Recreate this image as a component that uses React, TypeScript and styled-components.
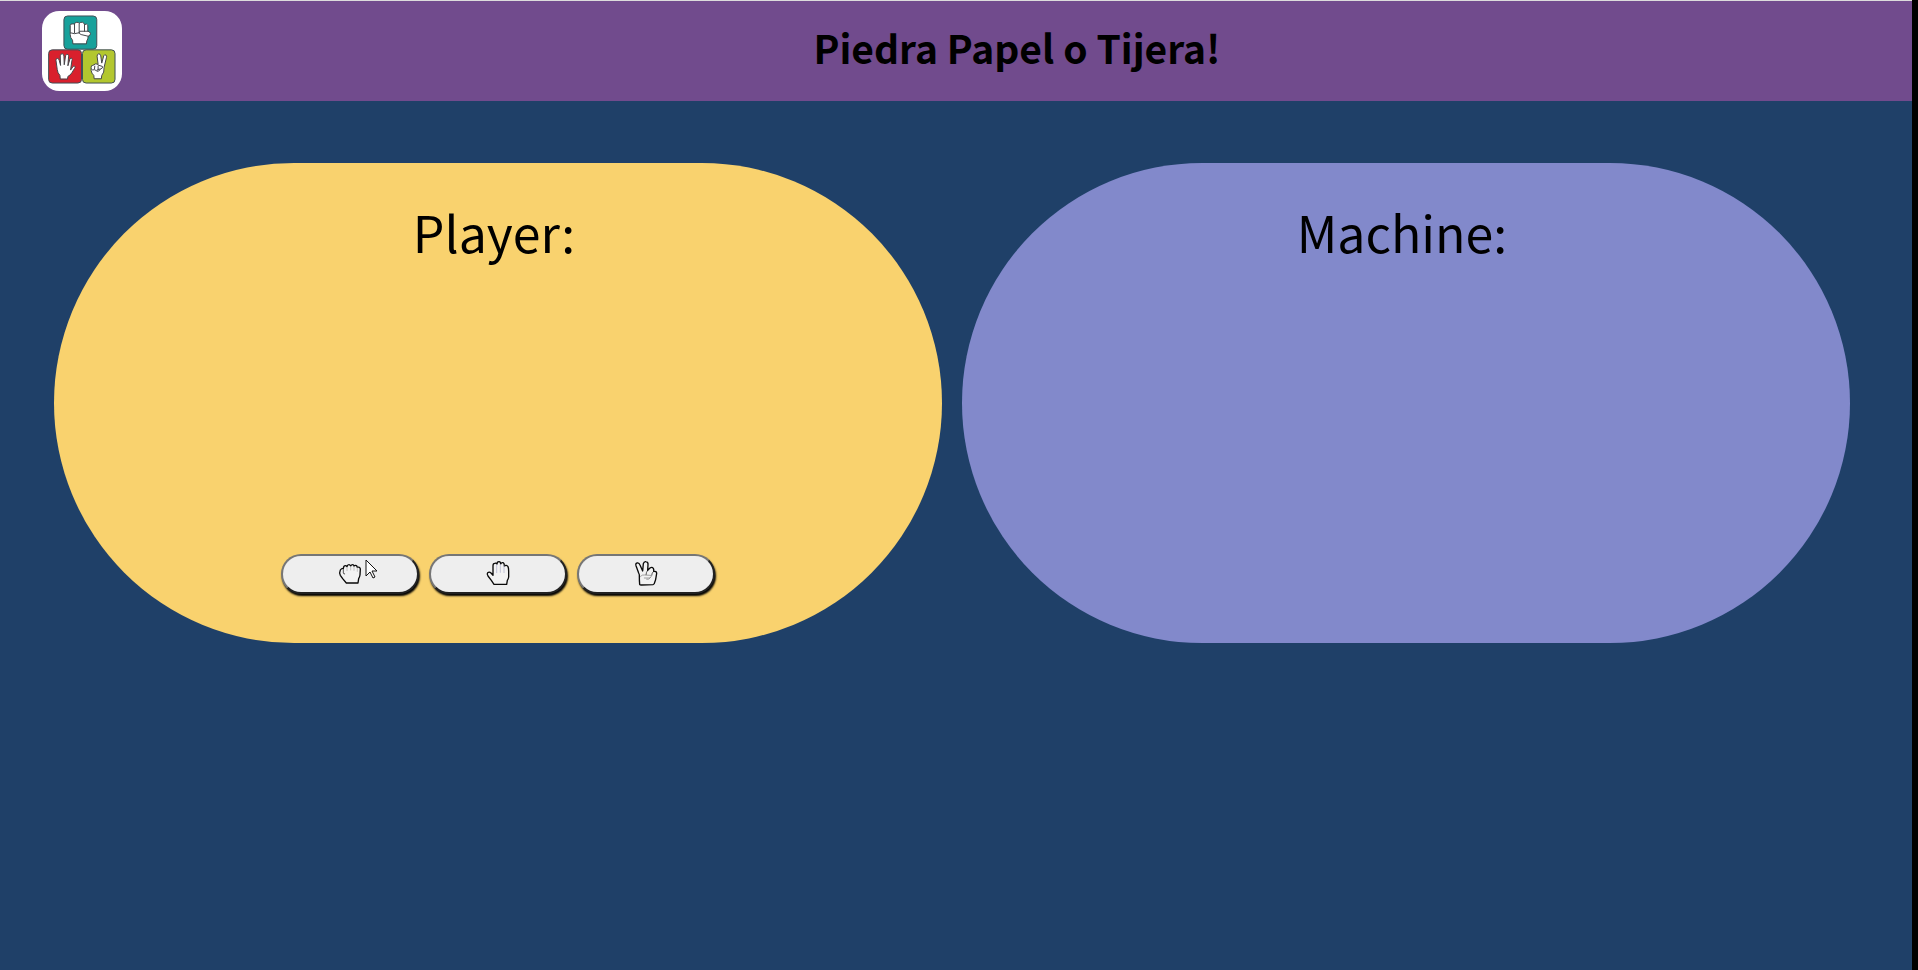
import React from "react";
import styled, { createGlobalStyle } from "styled-components";

const GlobalStyle = createGlobalStyle`
  * { box-sizing: border-box; }
  html { background: #000; }
  body { margin: 0; font-family: "Noto Sans CJK SC", "Noto Sans", sans-serif; color: #000; }
`;

const Page = styled.div`
  min-height: 100vh;
  margin-right: 6px;
  background: #1f4068;
`;

const Header = styled.header`
  display: flex;
  align-items: center;
  height: 101px;
  padding-left: 42px;
  border-top: 1px solid #dcdcdc;
  background: #714b8d;
`;

const Logo = styled.svg`
  flex: none;
  width: 80px;
  height: 80px;
`;

const Title = styled.h1`
  flex: 1;
  margin: 0;
  padding-bottom: 8px;
  text-align: center;
  font-size: 39px;
  line-height: 48px;
  font-weight: 700;
`;

const Board = styled.main`
  display: flex;
  gap: 20px;
  padding: 62px 62px 62px 54px;
`;

const Panel = styled.section<{ $color: string }>`
  flex: 1;
  display: flex;
  flex-direction: column;
  align-items: center;
  justify-content: space-between;
  min-height: 480px;
  padding: 36px 20px 49px 12px;
  border-radius: 240px;
  background: ${(p) => p.$color};
`;

const PanelTitle = styled.h2`
  margin: 0;
  font-size: 50px;
  line-height: 64px;
  font-weight: 400;
`;

const Choices = styled.div`
  display: flex;
  gap: 10px;
  padding-left: 8px;
`;

const Choice = styled.button`
  position: relative;
  display: flex;
  align-items: center;
  justify-content: center;
  width: 138px;
  height: 40px;
  padding: 0;
  border: 2px solid;
  border-color: #767676 #222 #222 #767676;
  border-radius: 20px;
  background: #eee;
  box-shadow: 1px 2px 2px #000;
  cursor: pointer;
`;

const HandIcon = styled.svg`
  width: 28px;
  height: 28px;
  fill: #f3f3f3;
  stroke: #0a0a0a;
  stroke-width: 4;
  stroke-linejoin: round;
  stroke-linecap: round;
`;

const Pointer = styled.svg`
  position: absolute;
  left: 82px;
  top: 3px;
  width: 14px;
  height: 21px;
  pointer-events: none;
`;

function RockIcon() {
  return (
    <HandIcon viewBox="198 60 84 84" aria-hidden="true">
      <path d="M218 116 L211 106 Q207 99 211 90 Q214 85 220 85 Q221 77 226 77 Q229 77 231 80 Q232 74 237 74 Q240 74 242 78 Q244 74 248 74 Q251 74 252 78 Q255 75 259 77 Q261 78 262 82 Q269 79 271 87 L270 105 Q269 111 266 116 L264 129 L229 129 Z" />
      <g fill="none" strokeWidth="2">
        <path d="M231 82 V92 M242 80 V90 M252 80 V91 M262 83 V94" stroke="#aaa" />
        <path d="M220 87 V99 Q221 103 224 102" />
      </g>
    </HandIcon>
  );
}

function PaperIcon() {
  return (
    <HandIcon viewBox="192 60 84 84" aria-hidden="true">
      <path d="M222 133 L214 121 L204 108 Q200 101 203 98 Q208 94 213 99 L219 106 V77 Q219 70 224 70 Q228 68 231 72 Q231 65 237 65 Q242 65 242 72 Q244 67 249 68 Q253 69 253 78 Q259 73 264 80 Q266 84 266 94 V111 Q265 117 262 121 L260 133 Z" />
      <path d="M230 74 V98 M241 73 V97 M252 77 V98" fill="none" stroke="#a9a9c8" strokeWidth="2" />
    </HandIcon>
  );
}

function ScissorsIcon() {
  return (
    <HandIcon viewBox="201 60 84 84" aria-hidden="true">
      <path d="M224 133 Q223 121 223 111 Q224 104 221 99 L213 77 Q211 70 216 69 Q222 67 225 75 L233 93 L235 71 Q237 64 243 65 Q250 66 249 74 L248 91 L255 84 Q261 80 265 85 Q267 89 266 94 Q275 93 275 100 L273 112 Q272 121 269 127 Q269 133 264 134 L229 135 Q225 135 224 133 Z" />
      <g fill="none" strokeWidth="2">
        <path d="M248 91 Q243 97 243 104 M266 94 Q260 98 260 106" />
        <path d="M226 110 Q231 103 238 105 L257 106 Q261 111 255 114 L238 114 M255 114 Q251 120 245 118" stroke="#777" />
      </g>
    </HandIcon>
  );
}

function GameLogo() {
  return (
    <Logo viewBox="35 33 241 241" role="img" aria-label="Piedra Papel o Tijera">
      <rect x="35" y="33" width="241" height="241" rx="52" fill="#fff" />
      <g stroke="#3f4f56" strokeWidth="3">
        <rect x="101" y="48" width="99" height="100" rx="11" fill="#17a19b" />
        <rect x="55" y="150" width="99" height="100" rx="11" fill="#d9202d" />
        <rect x="157" y="150" width="98" height="100" rx="11" fill="#b3c72f" />
      </g>
      <g fill="#fff" stroke="#45474b" strokeWidth="3" strokeLinejoin="round" strokeLinecap="round">
        <path d="M128 131 L127 121 Q120 114 120 104 L120 76 Q121 71 127 72 L133 72 Q134 67 140 67 Q146 67 148 70 Q151 66 157 67 Q162 68 163 74 Q170 70 173 76 L173 94 Q180 95 181 101 Q181 107 174 109 Q174 118 170 123 L169 131 Z" />
        <path d="M133 73 V99 M147 71 V99 M163 74 V94 M121 99 Q132 104 146 99 M173 94 L149 94 Q146 96 148 101 L153 104 L174 109" fill="none" />
        <path d="M90 237 L89 227 Q82 220 81 210 L77 181 Q77 175 82 176 Q86 176 87 182 L91 197 L90 168 Q91 161 96 162 Q101 162 101 169 L102 195 L106 168 Q108 162 113 164 Q116 166 115 171 L113 198 L119 178 Q122 172 125 176 Q127 178 125 183 L121 211 L128 201 Q132 196 134 200 Q136 203 133 206 L125 219 Q120 227 113 230 L112 237 Z" />
        <path d="M192 236 L191 227 Q184 221 183 212 L183 203 Q183 196 188 197 L197 192 L204 194 L201 169 Q201 163 206 162 Q211 162 212 168 L215 190 L221 168 Q223 163 228 166 Q231 168 229 174 L222 203 Q223 219 215 227 L214 236 Z" />
        <path d="M184 208 Q188 214 193 209 L194 199 M194 211 Q199 214 204 210 L204 200 M204 196 L217 200 Q220 205 211 208 L204 209 M201 215 Q207 215 211 209" fill="none" />
      </g>
    </Logo>
  );
}

export default function App() {
  return (
    <>
      <GlobalStyle />
      <Page>
        <Header>
          <GameLogo />
          <Title>Piedra Papel o Tijera!</Title>
        </Header>
        <Board>
          <Panel $color="#f9d26e">
            <PanelTitle>Player:</PanelTitle>
            <Choices>
              <Choice type="button" aria-label="Piedra">
                <RockIcon />
                <Pointer viewBox="0 0 14 21" aria-hidden="true">
                  <path d="M1 1 V17 L5 13 L8 19 L10 18 L7 12 H12 Z" fill="#fff" stroke="#111" strokeWidth="1" />
                </Pointer>
              </Choice>
              <Choice type="button" aria-label="Papel">
                <PaperIcon />
              </Choice>
              <Choice type="button" aria-label="Tijera">
                <ScissorsIcon />
              </Choice>
            </Choices>
          </Panel>
          <Panel $color="#8289cb">
            <PanelTitle>Machine:</PanelTitle>
          </Panel>
        </Board>
      </Page>
    </>
  );
}
